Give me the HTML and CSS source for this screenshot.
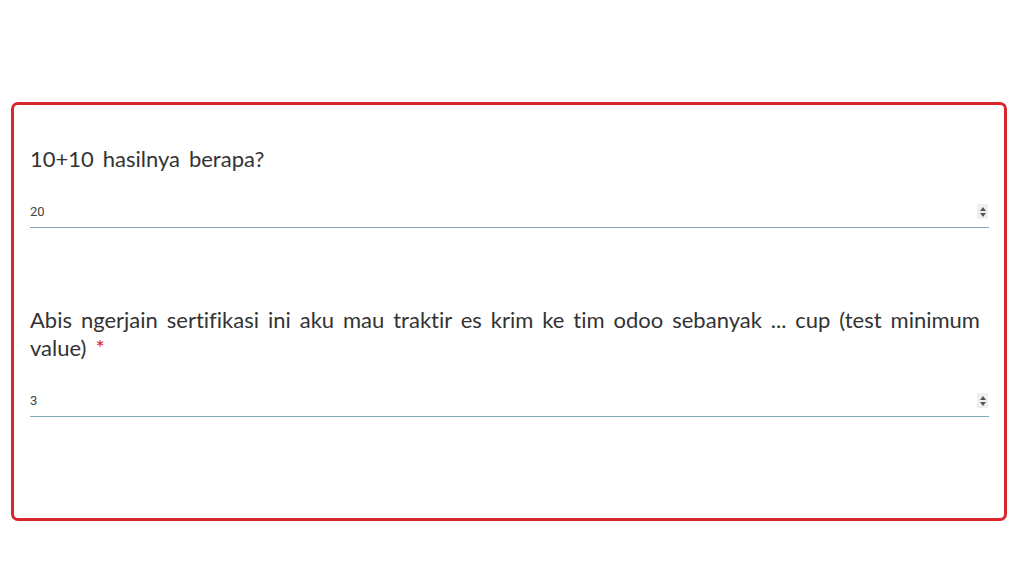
FILE: index.html
```html
<!DOCTYPE html>
<html lang="en">
<head>
    <meta charset="UTF-8">
    <title>Survey</title>
    <link rel="stylesheet" href="styles.css">
</head>
<body>
    <div class="card">
        <div class="question">
            <h3 class="question-title">10+10 hasilnya berapa?</h3>
            <div class="answer">
                <input type="text" class="answer-input" value="20">
                <span class="spinner"><i class="up"></i><i class="down"></i></span>
            </div>
        </div>
        <div class="question">
            <h3 class="question-title">Abis ngerjain sertifikasi ini aku mau traktir es krim ke tim odoo sebanyak ... cup (test minimum value) <span class="required">*</span></h3>
            <div class="answer">
                <input type="text" class="answer-input" value="3">
                <span class="spinner"><i class="up"></i><i class="down"></i></span>
            </div>
        </div>
    </div>
</body>
</html>
```

FILE: styles.css
```css
body {
    margin: 0;
    padding: 0;
    background-color: #fff;
    font-family: Lato, "Open Sans", sans-serif;
    color: #333;
}
.card {
    margin: 102px 23px 0 11px;
    height: 413px;
    border: 3px solid #d9262b;
    border-radius: 7px;
    padding: 0 15px 0 16px;
}
.question {
    padding-top: 40px;
}
.question + .question {
    padding-top: 78px;
}
.question-title {
    margin: 0 0 26px;
    font-size: 22px;
    font-weight: normal;
    line-height: 28px;
    word-spacing: 3.3px;
    font-variant-ligatures: none;
    color: #333;
}
.required {
    color: #d9262b;
}
.answer {
    display: flex;
    align-items: center;
    border-bottom: 1px solid #7ea9b5;
}
.answer-input {
    flex: 1;
    border: none;
    outline: none;
    padding: 5px 0 8px;
    font-family: Roboto, Arial, sans-serif;
    font-size: 13px;
    color: #444;
    background: transparent;
}
.spinner {
    display: flex;
    flex-direction: column;
    align-items: center;
    justify-content: center;
    gap: 2px;
    width: 11px;
    height: 15px;
    margin-right: 1px;
    margin-bottom: 3px;
    background-color: #efefef;
}
.spinner i {
    width: 0;
    height: 0;
    border-left: 3px solid transparent;
    border-right: 3px solid transparent;
}
.spinner .up {
    border-bottom: 4px solid #555;
}
.spinner .down {
    border-top: 4px solid #555;
}
```
